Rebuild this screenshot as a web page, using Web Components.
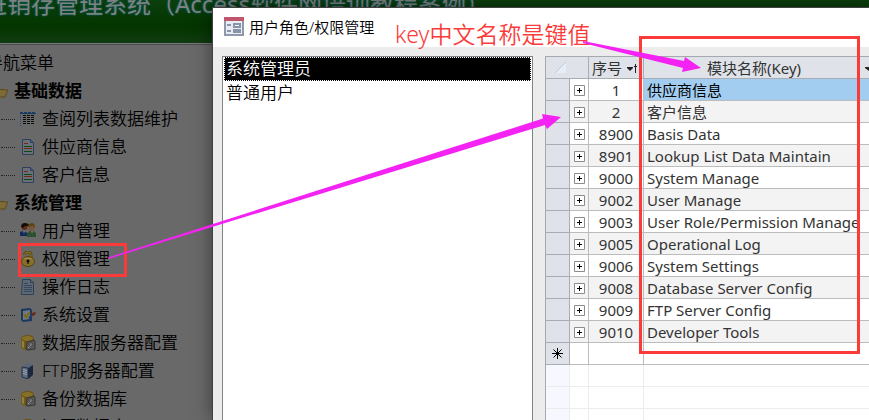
<!DOCTYPE html>
<html lang="zh-CN">
<head>
<meta charset="utf-8">
<title>用户角色/权限管理</title>
<style>
    body {
        margin: 0;
        font-family: "Noto Sans", "Noto Sans CJK SC", sans-serif;
        overflow: hidden;
    }
</style>
</head>
<body>
<app-desktop>
    <app-banner>进销存管理系统（Access软件网培训教程案例）</app-banner>
    <nav-tree></nav-tree>
    <app-dialog slot="dialog" caption="用户角色/权限管理">
        <role-list></role-list>
        <module-table></module-table>
    </app-dialog>
    <callout-marks slot="marks">key中文名称是键值</callout-marks>
</app-desktop>

<script>
    const icons = {
        folder: `<path d="M1 5V4h5l1 2h6v2" fill="#77622a"/><path d="M0 14V6h4l10 1h2l-3 7z" fill="#7c6a37" stroke="#5d4a18"/>`,
        list: `<path d="M0 1.500h16" stroke="#173a66" stroke-dasharray="3 1"/><path d="M0 2.500h16" stroke="#173a66"/><path d="M.5 4v11" stroke="#234b78" stroke-dasharray="1 1"/><path d="M3 4.500h12M3 6.500h12M3 8.500h12M3 10.500h12M3 12.500h12" stroke="#0b0b0b" stroke-dasharray="3 1"/>`,
        report: `<path d="M2.500.5h8l3 3v12h-11z" fill="#697079" stroke="#2f3f5c"/><path d="M10.500.5v3h3" fill="#4d5d78" stroke="#2f3f5c"/><path d="M4 7.500h8M4 12.500h8" stroke="#0d4a12"/><path d="M4 4.500h4M4 9.500h8" stroke="#7a2413"/>`,
        users: `<circle cx="4.500" cy="4" r="3" fill="#5e3019"/><path d="M1 4q0-4 4-4t4 3H5L3 5z" fill="#170d08"/><circle cx="11.500" cy="5" r="3" fill="#77583b"/><path d="M8 4q1-4 4-4t3 5l-2-2z" fill="#604413"/><path d="M0 13V9l3-1 3 1 2 3v1z" fill="#12285f"/><path d="M7 14v-4l3-2h3l3 2v4z" fill="#2b5130"/><path d="M3 8l1 3 1-3zM11 8l1 3 1-3z" fill="#767676"/>`,
        lock: `<path d="M4.500 4V3.500Q5 1 8 1t3 3v4" fill="none" stroke="#614c12" stroke-width="3"/><path d="M4.500 4V3.500Q5 1 8 1t3 3v4" fill="none" stroke="#8a742c"/><ellipse cx="8" cy="10.500" rx="6.500" ry="5" fill="#85702b" stroke="#59450d"/><path d="M4 8q4-2 8 0" stroke="#a2924d" fill="none"/><circle cx="8" cy="10" r="1.500" fill="#080500"/><path d="M8 10v3" stroke="#080500"/>`,
        log: `<path d="M2.500.5h8l3 3v12h-12z" fill="#5c6873" stroke="#303f57"/><path d="M10.500.5v3h3" fill="#59677b" stroke="#303f57"/><path d="M4 4.500h4M4 6.500h8M4 8.500h8M4 10.500h8M4 12.500h8" stroke="#35475f"/>`,
        settings: `<path d="M1 2l9-1 2 2v11l-9 1-2-2z" fill="#1b3860"/><path d="M3 4l7-1v9l-7 1z" fill="#717a80"/><path d="M4 7l2 3 4-5" fill="none" stroke="#7c6817" stroke-width="2"/><path d="M8 11l4-5 2 1-4 5z" fill="#243f64"/><path d="M12 6l3-1 1 1-1 2-3 1z" fill="#672b18"/>`,
        database: `<path d="M1 4v8q3 4 8 3l5-2V3z" fill="#735b12"/><path d="M2 5l2 1v7l-2-1z" fill="#938047"/><ellipse cx="7.500" cy="3.500" rx="6" ry="3" fill="#867026" stroke="#68500e"/><path d="M7 7l7-2 1 1v8l-8 1-1-1z" fill="#5a5a5a" stroke="#353535"/><circle cx="11" cy="9.500" r="2" fill="#747474" stroke="#454545"/><path d="M8 13l3-3" stroke="#919191"/>`,
        server: `<path d="M8 5l5-3v10l-5 4z" fill="#1b2639"/><path d="M2 4l6-4 5 2-5 3z" fill="#59657a"/><path d="M2 4l6 1v11l-6-2z" fill="#5f6c80" stroke="#26334a"/><path d="M3 6.500l4 1M3 8.500l4 1M3 10.500l4 1" stroke="#9aa2ad"/>`
    };

    const tree = [
        { text: "基础数据", group: true },
        { text: "查阅列表数据维护", icon: "list" },
        { text: "供应商信息", icon: "report" },
        { text: "客户信息", icon: "report" },
        { text: "系统管理", group: true },
        { text: "用户管理", icon: "users" },
        { text: "权限管理", icon: "lock" },
        { text: "操作日志", icon: "log" },
        { text: "系统设置", icon: "settings" },
        { text: "数据库服务器配置", icon: "database" },
        { text: "FTP服务器配置", icon: "server" },
        { text: "备份数据库", icon: "database" },
        { text: "还原数据库", icon: "database" }
    ];

    const modules = [
        ["1", "供应商信息"],
        ["2", "客户信息"],
        ["8900", "Basis Data"],
        ["8901", "Lookup List Data Maintain"],
        ["9000", "System Manage"],
        ["9002", "User Manage"],
        ["9003", "User Role/Permission Manage"],
        ["9005", "Operational Log"],
        ["9006", "System Settings"],
        ["9008", "Database Server Config"],
        ["9009", "FTP Server Config"],
        ["9010", "Developer Tools"]
    ];

    class AppDesktop extends HTMLElement {
        constructor() {
            super();
            this.attachShadow({mode: "open"}).innerHTML = `
            <style>
                :host {
                    display: block;
                    position: relative;
                    height: 100vh;
                    overflow: hidden;
                    background: #696969;
                }
            </style>
            <slot></slot>
            <slot name="dialog"></slot>
            <slot name="marks"></slot>
            `;
        }
    }

    class AppBanner extends HTMLElement {
        constructor() {
            super();
            this.attachShadow({mode: "open"}).innerHTML = `
            <style>
                :host {
                    display: block;
                    height: 43px;
                    overflow: hidden;
                    background: linear-gradient(#0b3f0d, #033500 60%, #113b10);
                    border-bottom: 1px solid #77777c;
                    box-shadow: 0 1px 0 #4b4b50;
                }
                h1 {
                    margin: -14px 0 0 -17px;
                    font-size: 24px;
                    line-height: 36px;
                    font-weight: 400;
                    color: #7d8280;
                    white-space: nowrap;
                    text-shadow: 0 0 3px #0a5550, 0 0 2px #0a5550;
                }
            </style>
            <h1><slot></slot></h1>
            `;
        }
    }

    class NavTree extends HTMLElement {
        constructor() {
            super();
            this.attachShadow({mode: "open"});
        }

        connectedCallback() {
            this.shadowRoot.innerHTML = `
            <style>
                :host {
                    display: block;
                    padding-top: 5px;
                    font-size: 17px;
                    line-height: 28px;
                    font-weight: 350;
                    color: #000;
                    white-space: nowrap;
                }
                h2 {
                    margin: 0 0 0 -14px;
                    font-size: 17px;
                    font-weight: inherit;
                }
                ul {
                    list-style: none;
                    margin: 0;
                    padding: 0;
                }
                a {
                    display: flex;
                    align-items: center;
                    height: 28px;
                    color: inherit;
                    text-decoration: none;
                }
                svg {
                    flex: none;
                    width: 16px;
                    height: 16px;
                    margin-right: 6px;
                }
                .group {
                    font-weight: 700;
                    margin-left: -8px;
                }
                .leaf::before {
                    content: "";
                    width: 14px;
                    margin: 0 5px 0 1px;
                    border-top: 1px dotted #222;
                }
            </style>
            <h2>导航菜单</h2>
            <ul>
                ${tree.map(item => `<li><a href="#" class="${item.group ? "group" : "leaf"}"><svg viewBox="0 0 16 16" aria-hidden="true">${icons[item.icon || "folder"]}</svg>${item.text}</a></li>`).join("")}
            </ul>
            `;
        }
    }

    class AppDialog extends HTMLElement {
        constructor() {
            super();
            this.attachShadow({mode: "open"});
        }

        connectedCallback() {
            this.shadowRoot.innerHTML = `
            <style>
                :host {
                    position: absolute;
                    inset: 8px 0 0 213px;
                    display: flex;
                    flex-direction: column;
                    background: #ececec;
                    box-shadow: 0 0 0 1px #414141, 0 0 18px rgba(0, 0, 0, 0.5);
                }
                header {
                    display: flex;
                    align-items: center;
                    gap: 5px;
                    height: 37px;
                    padding: 0 0 2px 11px;
                    background: #fff;
                }
                h2 {
                    margin: 0;
                    font-size: 15px;
                    font-weight: 350;
                }
                .content {
                    flex: 1;
                    min-height: 0;
                    display: flex;
                    gap: 12px;
                    padding: 9px 0 0 9px;
                }
            </style>
            <header>
                <svg width="20" height="19" viewBox="0 0 20 19" aria-hidden="true">
                    <path d="M1 1h18v17H1z" fill="#e9edf3" stroke="#8e99ab" stroke-width="2"/>
                    <path d="M0 0h20v4H0z" fill="#c0566c"/>
                    <path d="M3 8h4M3 14h4" stroke="#8794aa" stroke-width="2"/>
                    <path d="M10 7h6v3h-6zM10 13h6v2h-6z" fill="#fff" stroke="#8794aa" stroke-width="2"/>
                </svg>
                <h2>${this.getAttribute("caption")}</h2>
            </header>
            <div class="content"><slot></slot></div>
            `;
        }
    }

    class RoleList extends HTMLElement {
        constructor() {
            super();
            this.attachShadow({mode: "open"}).innerHTML = `
            <style>
                :host {
                    flex: none;
                    box-sizing: border-box;
                    width: 311px;
                    padding: 0 1px;
                    background: #fff;
                    border: 1px solid #808488;
                    border-bottom: 0;
                }
                button {
                    display: block;
                    width: 100%;
                    height: 24px;
                    padding: 0 2px;
                    border: 0;
                    background: none;
                    font: 350 17px/24px "Noto Sans", "Noto Sans CJK SC", sans-serif;
                    text-align: left;
                    color: #000;
                }
                .selected {
                    background: #000;
                    color: #fff;
                    outline: 1px dotted #fff;
                    outline-offset: -1px;
                }
            </style>
            <button class="selected">系统管理员</button>
            <button>普通用户</button>
            `;
        }
    }

    class ModuleTable extends HTMLElement {
        constructor() {
            super();
            this.attachShadow({mode: "open"});
        }

        connectedCallback() {
            this.shadowRoot.innerHTML = `
            <style>
                :host {
                    flex: 1;
                    min-width: 0;
                    overflow: hidden;
                    background: #fff;
                    border: 1px solid #a5a9ae;
                    border-width: 1px 0 0 1px;
                    font-size: 15px;
                    color: #333;
                }
                table {
                    width: 100%;
                    table-layout: fixed;
                    border-collapse: separate;
                    border-spacing: 0;
                }
                .selector { width: 24px; }
                .expand { width: 19px; }
                .number { width: 55px; }
                th, td {
                    box-sizing: border-box;
                    height: 22px;
                    padding: 0;
                    line-height: 20px;
                    font-weight: 400;
                    white-space: nowrap;
                    border: 1px solid #bcbcbc;
                    border-width: 0 1px 1px 0;
                }
                th {
                    background: #dfe2e8;
                    border-color: #a9adb3;
                }
                td:nth-child(3) { text-align: center; }
                td:last-child, th:last-child { border-right: 0; }
                td:last-child { padding-left: 3px; }
                tr:nth-child(even) td { background: #f3f3f3; }
                .current td:last-child { background: #a3cdf0; color: #000; }
                .head {
                    display: flex;
                    align-items: center;
                    justify-content: space-between;
                    padding: 0 5px 0 3px;
                }
                .wide {
                    padding: 0;
                    margin-right: -4px;
                }
                .wide span { flex: 1; }
                .corner svg { display: block; margin-left: 9px; }
                button {
                    display: block;
                    padding: 0;
                    border: 0;
                    background: none;
                }
                td button { margin: 0 auto; padding-top: 1px; }
                svg { display: block; }
                .star svg { margin: 0 auto; }
                .blank th { background: #f6f7ff; }
                .blank th, tr.blank td { border-color: #ececec; }
                tr.blank td, tr.new td { background: #fff; }
            </style>
            <table>
                <colgroup><col class="selector"><col class="expand"><col class="number"><col></colgroup>
                <thead>
                    <tr>
                        <th colspan="2" class="corner"><svg width="11" height="11" viewBox="0 0 11 11" aria-hidden="true"><path d="M11 0v11H0z" fill="#e6edf5"/><path d="M0 11L11 0" stroke="#b9cbdc"/></svg></th>
                        <th><div class="head"><span>序号</span><button aria-label="排序"><svg width="11" height="12" viewBox="0 0 11 12"><path d="M0 5h6v1L3 9 0 6z" fill="#222"/><path d="M8.500 11V2M7 4.500h3" stroke="#222"/></svg></button></div></th>
                        <th><div class="head wide"><span>模块名称(Key)</span><button aria-label="筛选"><svg width="9" height="12" viewBox="0 0 9 12"><path d="M1 5h7v1L5 9 1 6z" fill="#222"/></svg></button></div></th>
                    </tr>
                </thead>
                <tbody>
                    ${modules.map((row, i) => `<tr class="${i === 0 ? "current" : ""}"><th></th><td><button aria-label="展开"><svg width="11" height="11" viewBox="0 0 11 11"><path d="M.5.5h10v10H.5z" fill="#fff" stroke="#8c8c8c"/><path d="M3 5.500h5M5.500 3v5" stroke="#000"/></svg></button></td><td>${row[0]}</td><td>${row[1]}</td></tr>`).join("")}
                    <tr class="new"><th class="star"><svg width="11" height="11" viewBox="0 0 11 11" aria-hidden="true"><path d="M5.500 0v11M0 5.500h11M1.500 1.500l8 8M9.500 1.500l-8 8" stroke="#000"/></svg></th><td></td><td></td><td></td></tr>
                    ${`<tr class="blank"><th></th><td></td><td></td><td></td></tr>`.repeat(3)}
                </tbody>
            </table>
            `;
        }
    }

    // red frames, pink arrows and the note lying over the whole desktop
    class CalloutMarks extends HTMLElement {
        constructor() {
            super();
            this.attachShadow({mode: "open"}).innerHTML = `
            <style>
                :host {
                    position: absolute;
                    inset: 0;
                    pointer-events: none;
                }
                p {
                    position: absolute;
                    left: 395px;
                    top: 17px;
                    margin: 0;
                    font-size: 23px;
                    line-height: 34px;
                    font-weight: 350;
                    color: #fb3a3a;
                    white-space: nowrap;
                }
                svg {
                    position: absolute;
                    left: 0;
                    top: 0;
                }
            </style>
            <p><slot></slot></p>
            <svg width="869" height="420" viewBox="0 0 869 420" aria-hidden="true">
                <path d="M19.500 244.500h106v31h-106zM640.500 37.500h218v315h-218z" fill="none" stroke="#fb3a3a" stroke-width="3"/>
                <path d="M108 257.500L543 118.500 542 114l19 3-14 12-2-4L108 259z" fill="#f423f4"/>
                <path d="M583 41L684 61l1-4 16 11-19 4 1-4L583 43z" fill="#f423f4"/>
            </svg>
            `;
        }
    }

    customElements.define("app-desktop", AppDesktop);
    customElements.define("app-banner", AppBanner);
    customElements.define("nav-tree", NavTree);
    customElements.define("app-dialog", AppDialog);
    customElements.define("role-list", RoleList);
    customElements.define("module-table", ModuleTable);
    customElements.define("callout-marks", CalloutMarks);
</script>
</body>
</html>
